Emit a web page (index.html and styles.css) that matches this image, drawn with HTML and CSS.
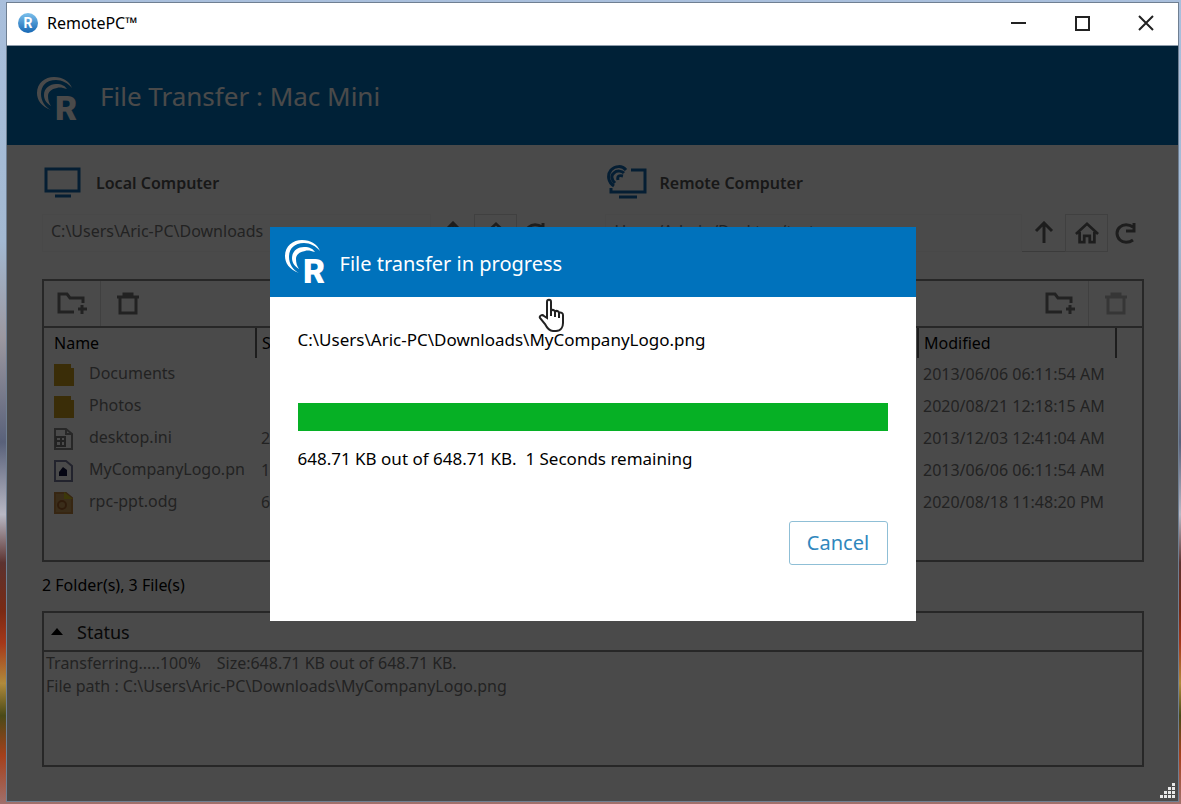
FILE: index.html
```html
<!DOCTYPE html>
<html lang="en">
<head>
  <meta charset="utf-8">
  <title>RemotePC™</title>
  <link rel="stylesheet" href="styles.css">
</head>
<body>
  <!-- Shared icons -->
  <svg class="sprite" aria-hidden="true">
    <symbol id="waves" viewBox="0 0 44 46">
      <path d="M15 34C5 30 1 24 1 17 1 7 9 1 18 1c9 0 15 4 18 11C32 7 26 4 20 4 10 4 5 10 5 18c0 7 4 13 10 16z"/>
      <path d="M15 30c-5-3-7-7-7-11C8 12 14 8 20 8c6 0 9 2 11 5-4-1-7-2-10-1-6 1-9 4-9 8 0 4 1 7 3 10z"/>
    </symbol>
    <symbol id="new-folder" viewBox="0 0 30 26">
      <path d="M17 21H2V3h8l3 4h13v5M25 14v9M21 18h9" fill="none" stroke="currentColor" stroke-width="3"/>
    </symbol>
    <symbol id="trash" viewBox="0 0 24 24">
      <path d="M1 5h22M8 4V2h8v2M4 6v15h16V6" fill="none" stroke="currentColor" stroke-width="3"/>
    </symbol>
    <symbol id="up" viewBox="0 0 24 24">
      <path d="M12 22V2M4 10l8-8 8 8" fill="none" stroke="currentColor" stroke-width="3"/>
    </symbol>
    <symbol id="home" viewBox="0 0 26 24">
      <path d="M1 13L13 2l12 11M5 11v11h5v-7h6v7h5V11" fill="none" stroke="currentColor" stroke-width="3"/>
    </symbol>
    <symbol id="refresh" viewBox="0 0 24 24">
      <path d="M19 19c-4 3-10 3-13 0-4-4-4-10 0-13 3-3 9-3 13 0M20 2v8h-8" fill="none" stroke="currentColor" stroke-width="3"/>
    </symbol>
    <symbol id="folder" viewBox="0 0 20 22">
      <path d="M0 0h17v4h3v18H0z" fill="#c99a1c"/>
    </symbol>
  </svg>

  <div class="window">
    <div class="titlebar">
      <span class="app-icon" aria-hidden="true">R</span>
      <span class="app-name">RemotePC™</span>
      <button class="win-btn" aria-label="Minimize"><svg viewBox="0 0 16 16"><path d="M1 8h15"/></svg></button>
      <button class="win-btn" aria-label="Maximize"><svg viewBox="0 0 16 16"><path d="M2 2h13v13H2z"/></svg></button>
      <button class="win-btn" aria-label="Close"><svg viewBox="0 0 16 16"><path d="M1 1l14 14M15 1L1 15"/></svg></button>
    </div>

    <div class="app">
      <header class="app-header">
        <svg class="logo" viewBox="0 0 44 46" aria-hidden="true"><use href="#waves"/><text x="19" y="44">R</text></svg>
        <h1>File Transfer : Mac Mini</h1>
      </header>

      <main>
        <div class="panels">
          <section class="panel">
            <h2>
              <svg class="computer" viewBox="0 0 40 36" aria-hidden="true"><path d="M2 4h33v22H2zM11 31h16"/></svg>
              Local Computer
            </h2>
            <div class="path-bar">
              <input type="text" aria-label="Local path" value="C:\Users\Aric-PC\Downloads">
              <button aria-label="Up"><svg><use href="#up"/></svg></button>
              <button class="home" aria-label="Home"><svg><use href="#home"/></svg></button>
              <button class="refresh" aria-label="Refresh"><svg><use href="#refresh"/></svg></button>
            </div>
            <div class="browser">
              <div class="tools">
                <button aria-label="New folder"><svg class="wide"><use href="#new-folder"/></svg></button>
                <button aria-label="Delete"><svg><use href="#trash"/></svg></button>
              </div>
              <table>
                <colgroup><col class="col-name"><col></colgroup>
                <thead>
                  <tr><th>Name</th><th>Size</th></tr>
                </thead>
                <tbody>
                  <tr>
                    <td><svg class="file"><use href="#folder"/></svg>Documents</td>
                    <td></td>
                  </tr>
                  <tr>
                    <td><svg class="file"><use href="#folder"/></svg>Photos</td>
                    <td></td>
                  </tr>
                  <tr>
                    <td><svg class="file" viewBox="0 0 20 22"><path d="M1 1h11l6 5v15H1zM12 1v5h6" fill="none" stroke="#888" stroke-width="2"/><path d="M2 9h9v9H2zM2 13h9M7 9v9" fill="none" stroke="#777" stroke-width="2"/></svg>desktop.ini</td>
                    <td>282 B</td>
                  </tr>
                  <tr>
                    <td><svg class="file" viewBox="0 0 20 22"><path d="M1 1h11l6 5v15H1z" fill="none" stroke="#777a9a" stroke-width="2"/><path d="M5 16v-4l4-5 4 3v6z" fill="#101440"/></svg>MyCompanyLogo.pn</td>
                    <td>1</td>
                  </tr>
                  <tr>
                    <td><svg class="file" viewBox="0 0 20 22"><path d="M1 1h11l6 5v15H1z" fill="#c99a5c" stroke="#bf8440" stroke-width="2"/><path d="M10 0l9 7h-9z" fill="#d0c020"/><circle cx="8" cy="13" r="4" fill="none" stroke="#a2622c" stroke-width="2"/></svg>rpc-ppt.odg</td>
                    <td>6</td>
                  </tr>
                </tbody>
              </table>
            </div>
            <p class="count">2 Folder(s), 3 File(s)</p>
          </section>

          <section class="panel">
            <h2>
              <svg class="computer" viewBox="0 0 40 36" aria-hidden="true">
                <path d="M24 5h14v22H4v-4M12 32h18"/>
                <path d="M7 21C1 17 0 10 4 5c4-4 11-5 15 0M8 18c-4-4-4-8-1-10 3-3 8-2 10 0M11 15c-1-4 1-5 5-4"/>
              </svg>
              Remote Computer
            </h2>
            <div class="path-bar">
              <input type="text" aria-label="Remote path" value="Users/Admin/Desktop/test">
              <button aria-label="Up"><svg><use href="#up"/></svg></button>
              <button class="home" aria-label="Home"><svg><use href="#home"/></svg></button>
              <button class="refresh" aria-label="Refresh"><svg><use href="#refresh"/></svg></button>
            </div>
            <div class="browser">
              <div class="tools right">
                <button aria-label="New folder"><svg class="wide"><use href="#new-folder"/></svg></button>
                <button aria-label="Delete" disabled><svg><use href="#trash"/></svg></button>
              </div>
              <table>
                <colgroup><col><col class="col-date"><col class="col-end"></colgroup>
                <thead>
                  <tr><th></th><th>Modified</th><th></th></tr>
                </thead>
                <tbody>
                  <tr><td></td><td>2013/06/06 06:11:54 AM</td><td></td></tr>
                  <tr><td></td><td>2020/08/21 12:18:15 AM</td><td></td></tr>
                  <tr><td></td><td>2013/12/03 12:41:04 AM</td><td></td></tr>
                  <tr><td></td><td>2013/06/06 06:11:54 AM</td><td></td></tr>
                  <tr><td></td><td>2020/08/18 11:48:20 PM</td><td></td></tr>
                </tbody>
              </table>
            </div>
          </section>
        </div>

        <section class="status">
          <button class="status-toggle" aria-expanded="true">
            <svg viewBox="0 0 12 7" aria-hidden="true"><path d="M0 7l6-7 6 7z"/></svg>
            Status
          </button>
          <div class="log">
            <p><span>Transferring.....100%</span><span>Size:648.71 KB out of 648.71 KB.</span></p>
            <p>File path : C:\Users\Aric-PC\Downloads\MyCompanyLogo.png</p>
          </div>
        </section>
      </main>

      <!-- Transfer dialog -->
      <div class="overlay">
        <div class="dialog" role="dialog" aria-labelledby="dialog-title">
          <div class="dialog-header">
            <svg class="logo" viewBox="0 0 44 46" aria-hidden="true"><use href="#waves"/><text x="19" y="44">R</text></svg>
            <h2 id="dialog-title">File transfer in progress</h2>
          </div>
          <div class="dialog-body">
            <p>C:\Users\Aric-PC\Downloads\MyCompanyLogo.png</p>
            <progress value="100" max="100" aria-label="Transfer progress"></progress>
            <p>648.71 KB out of 648.71 KB.&nbsp; 1 Seconds remaining</p>
            <button class="cancel">Cancel</button>
          </div>
          <svg class="pointer" viewBox="0 0 28 36" aria-hidden="true">
            <path d="M9 20V4c0-3 4-3 4 0v9c1-2 4-1 4 1 1-2 4-1 4 1 2-1 4 0 4 2v8c0 4-2 8-7 8h-3c-4 0-6-3-8-7l-5-6c-1-2 2-4 4-2z"/>
            <path d="M13 12v6M17 14v5M21 15v5"/>
          </svg>
        </div>
      </div>

      <svg class="grip" viewBox="0 0 16 16" aria-hidden="true">
        <path d="M12 0h3v3h-3zM8 4h3v3H8zM12 4h3v3h-3zM4 8h3v3H4zM8 8h3v3H8zM12 8h3v3h-3zM0 12h3v3H0zM4 12h3v3H4zM8 12h3v3H8zM12 12h3v3h-3z"/>
      </svg>
    </div>
  </div>
</body>
</html>
```
FILE: styles.css
```css
* {
  box-sizing: border-box;
}
body {
  margin: 0;
  min-height: 100vh;
  display: flex;
  padding: 2px 2px 2px 6px;
  font-family: "Noto Sans", "Open Sans", sans-serif;
  font-size: 16px;
  color: #000;
  /* desktop wallpaper showing round the window */
  background: linear-gradient(#a9bfdc 0, #a3b9d2 30%, #9c98a0 42%, #59617a 55%, #b8b8c4 64%, #5c3330 70%, #7a2a14 76%, #a5381a 80%, #b08a3c 85%, #4a4a18 89%, #a5401c 94%, #a0706c 100%);
}
h1, h2, p {
  margin: 0;
  font-weight: normal;
}
button {
  font: inherit;
  color: inherit;
  background: none;
  border: none;
  padding: 0;
}
.sprite {
  position: absolute;
  width: 0;
  height: 0;
}
.window {
  flex: 1;
  display: flex;
  flex-direction: column;
  border: 1px solid #6f7f92;
  background: #fff;
}

/* Title bar */
.titlebar {
  display: flex;
  align-items: center;
  height: 43px;
  padding: 0 0 2px 11px;
  border-bottom: 1px solid #8e9cab;
}
.app-icon {
  width: 20px;
  height: 20px;
  margin-right: 9px;
  border-radius: 50%;
  background: linear-gradient(#7cc0ec, #1667b4);
  color: #fff;
  font: bold 14px/20px Roboto, sans-serif;
  text-align: center;
}
.app-name {
  flex: 1;
}
.win-btn {
  display: flex;
  align-items: center;
  justify-content: center;
  width: 64px;
  height: 40px;
}
.win-btn svg {
  width: 16px;
  height: 16px;
  fill: none;
  stroke: #222;
  stroke-width: 2;
}

/* Application area */
.app {
  position: relative;
  flex: 1;
  display: flex;
  flex-direction: column;
}
.app-header {
  display: flex;
  align-items: center;
  gap: 20px;
  height: 99px;
  padding: 6px 0 0 29px;
  background: #0072bc;
  color: #fff;
}
.app-header h1 {
  font-size: 26px;
  margin-bottom: 6px;
}
.logo {
  width: 44px;
  height: 46px;
  overflow: visible;
  fill: #fff;
  font: 900 34px Roboto, sans-serif;
}
main {
  flex: 1;
  padding: 18px 34px 34px 35px;
  display: flex;
  flex-direction: column;
}
.panels {
  display: grid;
  grid-template-columns: 511fr 538fr;
  gap: 52px;
}
.panel h2 {
  display: flex;
  align-items: center;
  gap: 12px;
  height: 40px;
  padding-left: 2px;
  font-size: 16px;
  font-weight: 600;
  color: #555;
}
.computer {
  width: 40px;
  height: 36px;
  fill: none;
  stroke: #1268b0;
  stroke-width: 3;
}
.path-bar {
  display: flex;
  height: 38px;
  margin: 11px 0 27px;
  color: #666;
}
.path-bar input {
  flex: 1;
  min-width: 0;
  border: 1px solid #f6f6f6;
  padding: 0 8px 4px;
  font: inherit;
  color: #777;
  background: none;
}
.path-bar button {
  width: 43px;
  border-bottom: 1px solid #ccc;
}
.path-bar .home {
  border: 1px solid #ddd;
}
.path-bar .refresh {
  width: 36px;
  border: none;
}
.path-bar svg, .tools svg {
  width: 24px;
  height: 24px;
  vertical-align: middle;
}
.browser {
  height: 283px;
  border: 2px solid #888;
  overflow: hidden;
}
.tools {
  display: flex;
  height: 47px;
  border-bottom: 2px solid #888;
  color: #777;
}
.tools.right {
  justify-content: flex-end;
}
.tools button {
  width: 56px;
}
.tools button + button {
  width: 54px;
  border-left: 1px solid #ddd;
}
.tools button:disabled {
  color: #bbb;
}
.tools .wide {
  width: 30px;
  height: 26px;
}
table {
  width: 100%;
  table-layout: fixed;
  border-collapse: collapse;
}
.col-name {
  width: 212px;
}
.col-date {
  width: 198px;
}
.col-end {
  width: 26px;
}
th {
  height: 30px;
  padding: 0 5px;
  border-right: 2px solid #666;
  text-align: left;
  font-weight: normal;
}
th:first-child {
  padding-left: 10px;
}
th:last-child {
  border-right: none;
}
td {
  height: 32px;
  padding: 0 5px;
  color: #777;
  overflow: hidden;
  white-space: nowrap;
}
td:first-child {
  padding-left: 10px;
}
.file {
  width: 20px;
  height: 22px;
  margin-right: 15px;
  vertical-align: middle;
}
.count {
  padding-top: 11px;
  line-height: 24px;
}

/* Status log */
.status {
  flex: 1;
  margin-top: 14px;
  border: 2px solid #888;
}
.status-toggle {
  display: flex;
  align-items: center;
  gap: 14px;
  width: 100%;
  height: 39px;
  padding-left: 7px;
  border-bottom: 2px solid #888;
  font-size: 18px;
  color: #222;
}
.status-toggle svg {
  width: 12px;
  height: 7px;
}
.log {
  padding: 0 2px;
  line-height: 23px;
  color: #777;
}
.log span {
  margin-right: 16px;
}

/* Dialog */
.overlay {
  position: absolute;
  inset: 0;
  display: flex;
  align-items: center;
  justify-content: center;
  background: rgba(0,0,0,0.71);
}
.dialog {
  position: relative;
  width: 646px;
  max-width: 90%;
  background: #fff;
}
.dialog-header {
  display: flex;
  align-items: center;
  gap: 12px;
  height: 70px;
  padding-left: 14px;
  background: #0072bc;
  color: #fff;
}
.dialog-header h2 {
  font-size: 20px;
  padding-top: 4px;
}
.dialog-body {
  display: flex;
  flex-direction: column;
  padding: 30px 28px 56px;
  font-size: 17px;
  line-height: 26px;
}
progress {
  appearance: none;
  width: 100%;
  height: 28px;
  margin: 50px 0 15px;
  border: none;
}
progress::-webkit-progress-bar {
  background: #e6e6e6;
}
progress::-webkit-progress-value {
  background: #06b025;
}
.cancel {
  align-self: flex-end;
  width: 99px;
  height: 44px;
  margin-top: 49px;
  border: 1px solid #8fbfd6;
  border-radius: 3px;
  font-size: 20px;
  color: #2f87bd;
}
.pointer {
  position: absolute;
  left: 268px;
  top: 71px;
  width: 28px;
  height: 36px;
  fill: #fff;
  stroke: #222;
  stroke-width: 2;
}
.grip {
  position: absolute;
  right: 2px;
  bottom: 2px;
  width: 16px;
  height: 16px;
  fill: #e8e8e8;
}
```
